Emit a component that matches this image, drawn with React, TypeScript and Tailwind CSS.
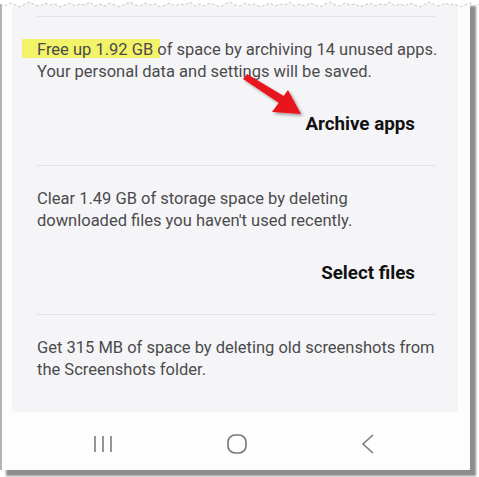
import React from "react";

const tornPoints = (() => {
  const pts: string[] = [];
  const ys = [4, 6, 3, 5, 7, 4, 2, 5, 6, 3, 5, 4, 7, 5, 3, 6, 4, 5, 2, 6];
  for (let i = 0; i <= 96; i++) {
    const x = i * 5;
    pts.push(`${x},${ys[i % ys.length]}`);
  }
  return pts.join(" ");
})();

const Section = ({ lines, action }: { lines: string[]; action?: string }) => (
  <div className="border-t border-[#e2e2e4] pt-[22px]">
    <p className="text-[16.5px] leading-[22px] text-[#4b4b4d] whitespace-nowrap">
      {lines.map((l, i) => (
        <React.Fragment key={i}>
          {i > 0 && <br />}
          {l}
        </React.Fragment>
      ))}
    </p>
    {action && (
      <div className="flex justify-end pr-[20px] pt-[30px] pb-[30px]">
        <span className="text-[18.8px] leading-[22px] font-bold text-[#111]">{action}</span>
      </div>
    )}
  </div>
);

const Arrow = () => (
  <svg className="absolute left-0 top-0" width="479" height="477" viewBox="0 0 479 477">
    <defs>
      <filter id="sh" x="-20%" y="-20%" width="140%" height="140%">
        <feDropShadow dx="2" dy="2" stdDeviation="1.5" floodColor="#000" floodOpacity="0.35" />
      </filter>
    </defs>
    <g filter="url(#sh)" fill="#e8141b">
      <polygon points="243,79 247,74 287,98 282,105" />
      <polygon points="301,114 272,112 288,90" />
    </g>
  </svg>
);

const NavBar = () => (
  <div className="h-[58px] flex items-center pt-[6px] pl-[81px] gap-[113px] text-[#7a7a7a]">
    <svg width="20" height="20" viewBox="0 0 20 20" stroke="currentColor" strokeWidth="1.6" fill="none">
      <line x1="2" y1="2" x2="2" y2="18" />
      <line x1="10" y1="2" x2="10" y2="18" />
      <line x1="18" y1="2" x2="18" y2="18" />
    </svg>
    <svg width="22" height="22" viewBox="0 0 22 22" stroke="currentColor" strokeWidth="1.7" fill="none">
      <rect x="2" y="2" width="18" height="18" rx="7" />
    </svg>
    <svg width="14" height="22" viewBox="0 0 14 22" stroke="currentColor" strokeWidth="1.6" fill="none">
      <polyline points="12,2 2,11 12,20" />
    </svg>
  </div>
);

export default function App() {
  return (
    <div className="relative w-[479px] h-[477px] bg-white overflow-hidden" style={{ fontFamily: "Roboto, 'Noto Sans', sans-serif" }}>
      <div className="w-[470px] h-[470px] bg-[#fdfdfd] border-l-2 border-[#b4b4b4] shadow-[6px_6px_2px_rgba(0,0,0,0.45)] pl-[10px] pr-[12px] flex flex-col">
        <div className="relative h-[412px] bg-[#f5f5f7] px-[25px] pr-[23px] pt-[16px] overflow-hidden">
          <div className="absolute left-[10px] top-[39px] w-[138px] h-[19px] bg-[#f3f36a]" />
          <div className="relative">
            <Section
              lines={["Free up 1.92 GB of space by archiving 14 unused apps.", "Your personal data and settings will be saved."]}
              action="Archive apps"
            />
            <Section
              lines={["Clear 1.49 GB of storage space by deleting", "downloaded files you haven't used recently."]}
              action="Select files"
            />
            <Section lines={["Get 315 MB of space by deleting old screenshots from", "the Screenshots folder."]} />
          </div>
        </div>
        <NavBar />
      </div>
      <svg className="absolute left-0 top-0" width="479" height="10" viewBox="0 0 479 10">
        <polygon points={`0,0 ${tornPoints} 479,0`} fill="#fff" />
        <polyline points={tornPoints} fill="none" stroke="#c8c8c8" strokeWidth="1" strokeDasharray="3 2" />
      </svg>
      <Arrow />
    </div>
  );
}
